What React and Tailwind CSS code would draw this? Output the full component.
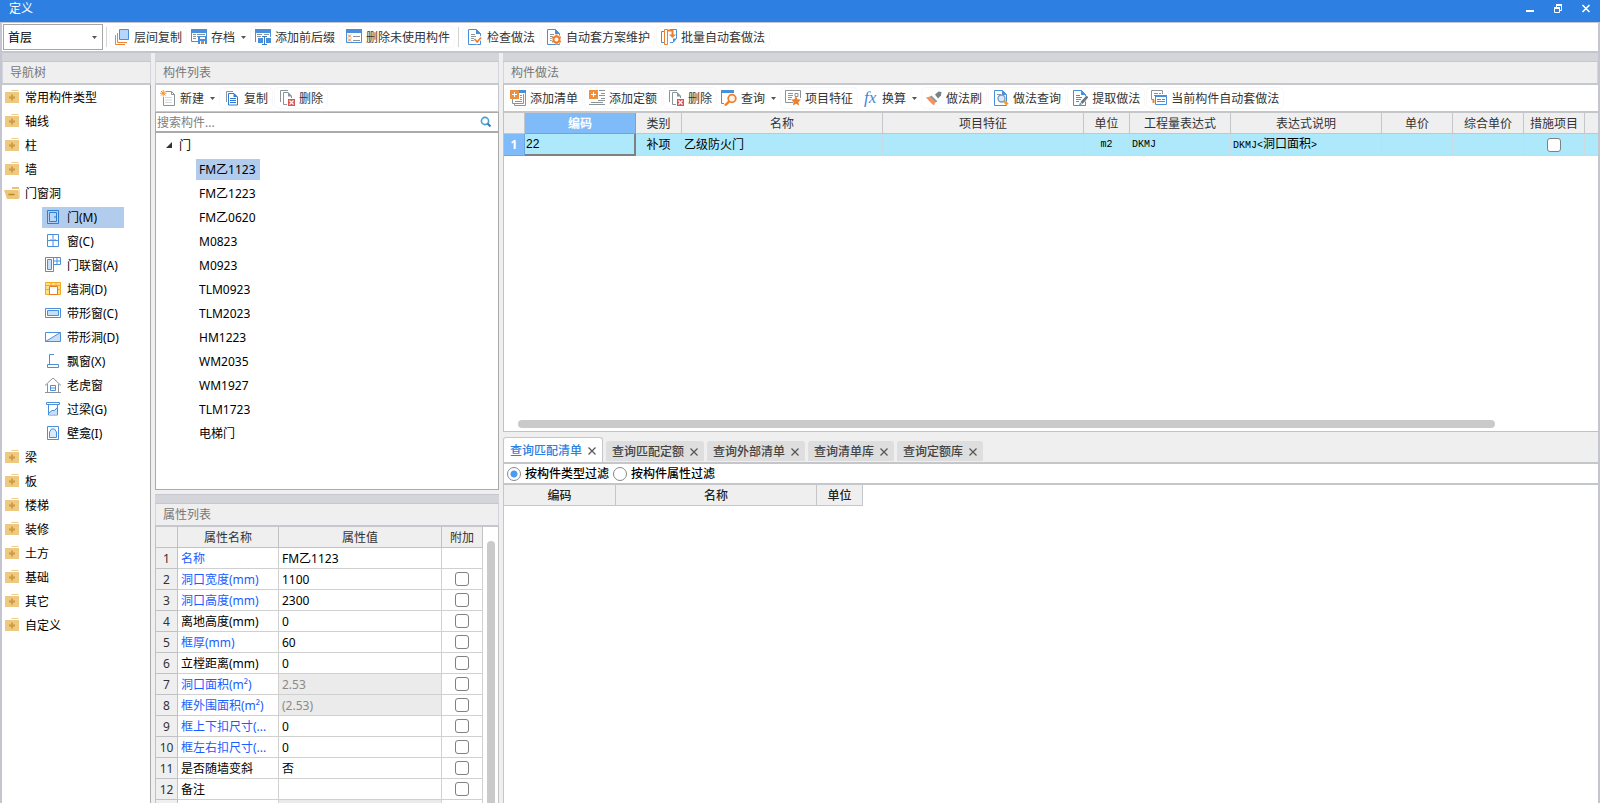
import { useState } from 'react';
import clsx from 'clsx';

const BLUE = '#4a8fdc';
const GRAY = '#8b9499';
const ORANGE = '#f07f2c';

function Svg({ children, size = 16 }) {
  return (
    <svg width={size} height={size} viewBox="0 0 16 16" fill="none" className="shrink-0" aria-hidden="true">
      {children}
    </svg>
  );
}

// page outline with a folded corner, shared by several document icons
function Page({ color = BLUE }) {
  return (
    <>
      <path d="M1.5 .5h8l4 4v11h-12z" fill="#fff" stroke={color} />
      <path d="M9 0v5h5z" fill={color} />
    </>
  );
}

function RedCross() {
  return (
    <>
      <path d="M9 9h7v7H9z" fill="#d85555" />
      <path d="M10.5 10.5l4 4m0-4l-4 4" stroke="#fff" strokeWidth="1.2" />
    </>
  );
}

const icons = {
  layers: (
    <>
      <path d="M1.5 6v9.5H11M3.5 4v9.5H13" stroke="#ee8338" />
      <path d="M5.5.5h9v10h-9z" fill="#b5d5fb" stroke={BLUE} />
    </>
  ),
  archive: (
    <>
      <path d="M.5 1v11.5H7M15.5 3v4" stroke={BLUE} />
      <path d="M0 0h16v4H0z" fill={BLUE} />
      <path d="M2 5.500h3M6 5.500h8M2 7.500h3M2 9.500h3M6 7.500h1" stroke={GRAY} />
      <path d="M7 7h9v8H7z" fill={BLUE} />
      <path d="M9 8h5v2H9zM9 12h5v3H9z" fill="#fff" />
      <path d="M10 12h3v3h-3z" fill={ORANGE} />
    </>
  ),
  affix: (
    <>
      <path d="M.5 2v11M15.5 2v6" stroke={BLUE} />
      <path d="M0 0h16v4H0z" fill={BLUE} />
      <path d="M2 5.500h5M9 5.500h5M2 7.500h4" stroke={GRAY} />
      <path d="M3 9h5v5H3zM11 9h5v5h-5z" fill={BLUE} />
      <path d="M7 7.500h5M9.500 7v8M7 15.500h5" stroke="#3c7cc4" />
    </>
  ),
  unused: (
    <>
      <path d="M.5.5h15v13H.5z" fill="#fff" stroke={BLUE} />
      <path d="M0 0h16v4H0z" fill={BLUE} />
      <path d="M2 5.5l3 3m0-3l-3 3m0 1l3 3m0-3l-3 3" stroke={ORANGE} />
      <path d="M7 7.5h7M7 11.5h7" stroke={GRAY} />
    </>
  ),
  check: (
    <>
      <Page />
      <path d="M4 5.500h4M4 7.500h5M4 9.500h3M4 11.500h3" stroke={GRAY} />
      <path d="M7.500 9.500l2.500 3.500L14.500 8" stroke="#fff" strokeWidth="3.500" />
      <path d="M7.500 10l2.700 3L14 8.500" stroke={ORANGE} strokeWidth="1.800" />
    </>
  ),
  plan: (
    <>
      <Page />
      <path d="M4 5.500h4M4 7.500h4M4 9.500h2M4 11.500h2" stroke={GRAY} />
      <circle cx="10.500" cy="10.500" r="5" fill="#fff" />
      <circle cx="10.500" cy="10.500" r="3" stroke={ORANGE} strokeWidth="2" />
      <path
        d="M10.500 5.500v2M10.500 13.500v2M6.200 8l1.700 1M13.100 12l1.700 1M6.200 13l1.700-1M13.100 9l1.700-1"
        stroke={ORANGE}
        strokeWidth="2"
      />
    </>
  ),
  batch: (
    <>
      <path d="M9 .5h6.500v9L12 13.500H9" stroke={BLUE} />
      <path d="M12 13.500v-4h3.500z" fill={BLUE} />
      <path d="M3 2.500H.5v11H3" stroke={BLUE} />
      <path d="M3.500.5h3v15h-3z" fill="#fff" stroke={ORANGE} />
      <path d="M6.500 1.500h5V7" stroke={ORANGE} strokeWidth="2" />
      <path d="M8 5.500h7L11.500 9z" fill={ORANGE} />
    </>
  ),
  create: (
    <>
      <path d="M6 1.500h5.500l3 3v11h-11V7" stroke={GRAY} />
      <path d="M11.500 1.500v3h3" stroke={GRAY} />
      <path d="M5 7.500h7M5 10h7M5 12.500h7" stroke="#d5d9dc" />
      <path d="M1 1l4.500 4.500M5.500 1L1 5.500M3.200 0v6.500M0 3.200h6.500" stroke="#f2952f" />
    </>
  ),
  copy: (
    <>
      <path d="M2.500 12V1.500H9" stroke={GRAY} />
      <path d="M4.500 3.500h5.500l3.500 3.500v8h-9z" fill="#fff" stroke="#2f7ad0" />
      <path d="M9.500 3v4h4z" fill="#2f7ad0" />
      <path d="M6 8.500h6M6 10.500h6M6 12.500h6" stroke="#2f7ad0" />
    </>
  ),
  remove: (
    <>
      <path d="M1.500 12V.500H9" stroke={GRAY} />
      <path d="M8 14.500H4.500v-12H9l3.500 3.500v2" stroke={GRAY} />
      <path d="M9 2v4.500h4z" fill={GRAY} />
      <RedCross />
    </>
  ),
  addList: (
    <>
      <path d="M9 0h7v3H9z" fill={BLUE} />
      <path d="M15.500 3v12.500h-11V13" stroke={GRAY} />
      <path d="M13.500 4v9.500h-11V9" stroke={GRAY} />
      <path d="M10 5.500h2M10 7.500h2M10 9.500h2M5 11.500h7" stroke={GRAY} />
      <path d="M0 0h9v9H0z" fill="#ec8f3e" />
      <path d="M2 4.500h5M4.500 2v5" stroke="#fff" />
    </>
  ),
  addQuota: (
    <>
      <path d="M10 .5h6M12 3.500h4M10 5.500h6M12 8.500h4M9 10.500h7M2 12.500h12M0 14.500h16" stroke={GRAY} />
      <path d="M0 0h9v9H0z" fill="#ec8f3e" />
      <path d="M2 4.500h5M4.500 2v5" stroke="#fff" />
    </>
  ),
  query: (
    <>
      <path d="M.5 2v11.500H3" stroke={BLUE} />
      <path d="M0 0h13v3H0z" fill={BLUE} />
      <circle cx="11" cy="8.500" r="3.800" fill="#fff3e8" stroke={ORANGE} strokeWidth="1.800" />
      <path d="M8.200 11.300L4 15.500" stroke={ORANGE} strokeWidth="2.400" />
    </>
  ),
  feature: (
    <>
      <path d="M8 12.500H.5V.500h15V8" stroke={GRAY} />
      <path d="M3 3.500h5M3 5.500h5M3 7.500h4M3 9.500h3M10 3.500h3v3h-3z" stroke={GRAY} />
      <path
        d="M11 6l1.500 3.200 3.500.4-2.600 2.300.7 3.600-3.100-1.800-3.100 1.800.7-3.600L6 9.600l3.500-.4z"
        fill={ORANGE}
      />
    </>
  ),
  brush: (
    <>
      <path d="M9 4.500L12.500 1.500 15.500 2l-.5 3.500-3 3z" fill="#76838a" />
      <path d="M5.500 5.500l6 6-2 1-6-5.500z" fill="#8d979c" />
      <path d="M0 7.500l4-1 5.500 5.500-1.500 3.500L5 13z" fill="#f9905c" />
    </>
  ),
  search: (
    <>
      <Page />
      <path d="M4 4.500h4" stroke={GRAY} />
      <circle cx="8.500" cy="8.500" r="3.500" fill="#d9e8fa" stroke="#7a9cc6" strokeWidth="1.400" />
      <path d="M11 11l3.500 3.500" stroke="#f0a030" strokeWidth="3" />
    </>
  ),
  extract: (
    <>
      <Page />
      <path d="M4 5.500h4M4 7.500h6M4 9.500h5M4 11.500h3" stroke={BLUE} />
      <path d="M15 7l-6 6.500" stroke="#fff" strokeWidth="4" />
      <path d="M15.500 6.500l-6 6.500" stroke="#69757c" strokeWidth="2.600" />
      <path d="M8 12.500l2 1.800-3 1.200z" fill="#3d9fc4" />
    </>
  ),
  current: (
    <>
      <path d="M3 9.500H.5v-9h11V4" stroke={GRAY} />
      <path d="M3 3.500h4M8 3.500h2M3 5.500h1" stroke={GRAY} />
      <path d="M2.500 10v3" stroke={ORANGE} strokeWidth="2" />
      <path d="M4.500 5.500h11v9h-11z" fill="#fff" stroke={BLUE} />
      <path d="M4 5h12v2H4z" fill={BLUE} />
      <path d="M6 9.500h4M6 11.500h8M11 9.500h3" stroke={BLUE} />
    </>
  ),
  // navigation tree
  door: (
    <>
      <path d="M2.500 1.500h11v13h-11z" fill="#b5d2f5" stroke="#2f7ed2" />
      <path d="M4.500 3.500h7v9h-7z" fill="#b9d6f7" stroke="#2f7ed2" />
      <path d="M9 8h2" stroke="#2f7ed2" />
    </>
  ),
  window: (
    <>
      <path d="M2.500 1.500h11v12h-11zM8 1v13M2 7.500h12" stroke={BLUE} />
      <path d="M5.500 6.500h1M9.500 6.500h1" stroke={BLUE} />
    </>
  ),
  doorWindow: (
    <>
      <path d="M.5.500h8v14h-8z" fill="#fff" stroke={BLUE} />
      <path d="M2.500 2.500h4v10h-4z" fill="#c9def7" stroke={BLUE} />
      <path d="M8.500.500h7v7h-7zM12 0v8M8 4h8" stroke={BLUE} />
    </>
  ),
  wallHole: (
    <>
      <path d="M.5 1.500h15v12H.5z" fill="#ffe08a" stroke="#f5a91c" />
      <path d="M0 4.500h16M0 8.500h4M12 8.500h4M6 1v3.500M11 1v3.500" stroke="#f5a91c" />
      <path d="M4.500 5.500h8v8h-8z" fill="#fff" stroke="#e8792a" />
    </>
  ),
  stripWindow: (
    <>
      <path d="M.5 3.500h15v9H.5z" fill="#fff" stroke={BLUE} />
      <path d="M2.500 5.500h11v5h-11z" fill="#c9def7" stroke={BLUE} />
    </>
  ),
  stripHole: (
    <>
      <path d="M.5 3.500h15v9H.5z" fill="#fff" />
      <path d="M15.500 3.500v9H.5z" fill="#c9def7" />
      <path d="M.5 3.500h15v9H.5zM.5 12.500l15-9" stroke={BLUE} />
    </>
  ),
  bay: <path d="M9 1.500H4.500v9.500M2.500 11.500h11v3h-11z" stroke={BLUE} />,
  dormer: (
    <>
      <path d="M0 8.500l8-7.500 8 7.500M2.500 7v8.500M13.500 7v8.500M0 15.500h16" stroke={GRAY} />
      <path d="M5.500 8.500h5v5h-5zM5 11h6" stroke={BLUE} />
    </>
  ),
  lintel: (
    <>
      <path d="M1.500 1.500h13v2h-13z" stroke={BLUE} />
      <path d="M3.500 3.500v10.500h9V3.500" stroke={BLUE} />
      <path d="M4 12l3-3h2l3-3v7.500H4z" fill="#c9def7" />
      <path d="M4 12l3-2.500h2.500L12 7" stroke={BLUE} />
    </>
  ),
  niche: (
    <>
      <path d="M2.500 1.500h11v13h-11z" fill="#fff" stroke={BLUE} />
      <path d="M4.500 12.500V7L6.500 4h3l2 3v5.500z" fill="#dce9fa" stroke={BLUE} />
    </>
  ),
  folder: (
    <>
      <path d="M8 1h6l1 1H7z" fill="#e9cd92" />
      <path d="M1 3h14v11H1z" fill="#eec982" />
      <path d="M5 8.500h6M8 5.500v6" stroke="#cd9a3c" strokeWidth="1.800" />
    </>
  ),
  folderOpen: (
    <>
      <path d="M3 5h12l1-2v10H4z" fill="#f4dda8" />
      <path d="M8 2h7v2H8z" fill="#e8c27a" />
      <path d="M0 5h14l1 9H3z" fill="#edc57a" />
      <path d="M4.500 9.500h6" stroke="#b98522" strokeWidth="1.400" />
    </>
  ),
};

function Icon({ name }) {
  if (name === 'fx') {
    return (
      <span className="w-4 shrink-0 font-[Liberation_Serif,serif] text-[17px] leading-4 text-[#3f87d9] italic">
        fx
      </span>
    );
  }
  return <Svg>{icons[name]}</Svg>;
}

function Caret() {
  return (
    <svg width="5" height="3" viewBox="0 0 5 3" className="shrink-0" aria-hidden="true">
      <path d="M0 0h5L2.500 3z" fill="#555" />
    </svg>
  );
}

function ToolButton({ icon, label, menu }) {
  return (
    <button
      type="button"
      className={clsx(
        'flex h-5 items-center rounded-sm whitespace-nowrap text-[#333] hover:bg-[#e6f1fd]',
        menu ? 'px-[2px]' : 'px-1 outline outline-[#f8f8f8]'
      )}
    >
      <Icon name={icon} />
      <span className="mt-px ml-1">{label}</span>
      {menu && (
        <span className="ml-[6px]">
          <Caret />
        </span>
      )}
    </button>
  );
}

function ToolGroup({ items }) {
  return (
    <div className="flex items-center gap-[3px]">
      {items.map((item) => (
        <ToolButton key={item.label} {...item} />
      ))}
    </div>
  );
}

function PanelTitle({ children, topLine }) {
  return (
    <header className="shrink-0 border-b-2 border-[#c6c8cd]">
      <div className={clsx('box-content h-2 border-b border-[#c6c8cf] bg-[#d4d5db]', topLine && 'border-t')} />
      <h2 className="h-[21px] border-x border-[#d4d5db] bg-[#efefef] pl-[7px] leading-[22px] text-[#777]">{children}</h2>
    </header>
  );
}

const editTools = [
  { icon: 'layers', label: '层间复制' },
  { icon: 'archive', label: '存档', menu: true },
  { icon: 'affix', label: '添加前后缀' },
  { icon: 'unused', label: '删除未使用构件' },
];

const methodTools = [
  { icon: 'check', label: '检查做法' },
  { icon: 'plan', label: '自动套方案维护' },
  { icon: 'batch', label: '批量自动套做法' },
];

const listTools = [
  { icon: 'create', label: '新建', menu: true },
  { icon: 'copy', label: '复制' },
  { icon: 'remove', label: '删除' },
];

const workTools = [
  { icon: 'addList', label: '添加清单' },
  { icon: 'addQuota', label: '添加定额' },
  { icon: 'remove', label: '删除' },
  { icon: 'query', label: '查询', menu: true },
  { icon: 'feature', label: '项目特征' },
  { icon: 'fx', label: '换算', menu: true },
  { icon: 'brush', label: '做法刷' },
  { icon: 'search', label: '做法查询' },
  { icon: 'extract', label: '提取做法' },
  { icon: 'current', label: '当前构件自动套做法' },
];

const navItems = [
  { label: '常用构件类型' },
  { label: '轴线' },
  { label: '柱' },
  { label: '墙' },
  {
    label: '门窗洞',
    children: [
      { icon: 'door', label: '门(M)' },
      { icon: 'window', label: '窗(C)' },
      { icon: 'doorWindow', label: '门联窗(A)' },
      { icon: 'wallHole', label: '墙洞(D)' },
      { icon: 'stripWindow', label: '带形窗(C)' },
      { icon: 'stripHole', label: '带形洞(D)' },
      { icon: 'bay', label: '飘窗(X)' },
      { icon: 'dormer', label: '老虎窗' },
      { icon: 'lintel', label: '过梁(G)' },
      { icon: 'niche', label: '壁龛(I)' },
    ],
  },
  { label: '梁' },
  { label: '板' },
  { label: '楼梯' },
  { label: '装修' },
  { label: '土方' },
  { label: '基础' },
  { label: '其它' },
  { label: '自定义' },
];

const components = [
  'FM乙1123',
  'FM乙1223',
  'FM乙0620',
  'M0823',
  'M0923',
  'TLM0923',
  'TLM2023',
  'HM1223',
  'WM2035',
  'WM1927',
  'TLM1723',
  '电梯门',
];

const properties = [
  { name: '名称', value: 'FM乙1123', blue: true, noExtra: true },
  { name: '洞口宽度(mm)', value: '1100', blue: true },
  { name: '洞口高度(mm)', value: '2300', blue: true },
  { name: '离地高度(mm)', value: '0' },
  { name: '框厚(mm)', value: '60', blue: true },
  { name: '立樘距离(mm)', value: '0' },
  { name: '洞口面积(m²)', value: '2.53', blue: true, readOnly: true },
  { name: '框外围面积(m²)', value: '(2.53)', blue: true, readOnly: true },
  { name: '框上下扣尺寸(...', value: '0', blue: true },
  { name: '框左右扣尺寸(...', value: '0', blue: true },
  { name: '是否随墙变斜', value: '否' },
  { name: '备注', value: '' },
];

const tabs = ['查询匹配清单', '查询匹配定额', '查询外部清单', '查询清单库', '查询定额库'];

function CheckBox({ label }) {
  return (
    <input
      type="checkbox"
      aria-label={label}
      className="mx-auto block size-[14px] appearance-none rounded-[3px] border border-[#808080] bg-white checked:bg-[#4a8fdc]"
    />
  );
}

function TitleBar() {
  return (
    <div className="flex h-[22px] shrink-0 items-center justify-between bg-[#2d7fe2] pr-2 pl-[9px] text-white">
      <h1 className="self-start pt-px leading-4">定义</h1>
      <div className="flex items-center gap-4">
        <button type="button" aria-label="最小化">
          <svg width="12" height="16" viewBox="0 0 12 16" className="block" aria-hidden="true">
            <path d="M2 7h8v2H2z" fill="#fff" />
          </svg>
        </button>
        <button type="button" aria-label="还原">
          <svg width="12" height="16" viewBox="0 0 12 16" fill="none" className="block" aria-hidden="true">
            <path d="M4 1h6v2H4zM2 4h6v2H2z" fill="#fff" />
            <path d="M4.500 2v2M9.500 2v5.500H8M2.500 5v4.500h5V5" stroke="#fff" />
          </svg>
        </button>
        <button type="button" aria-label="关闭">
          <svg width="12" height="16" viewBox="0 0 12 16" fill="none" className="block" aria-hidden="true">
            <path d="M2.500 2l7 7m0-7l-7 7" stroke="#fff" strokeWidth="1.600" />
          </svg>
        </button>
      </div>
    </div>
  );
}

function MainToolbar() {
  return (
    <div className="flex h-[31px] shrink-0 items-center border-t border-b-2 border-[#c3c6ce] bg-white pl-px">
      <div className="relative">
        <select
          aria-label="楼层"
          className="block h-[26px] w-[100px] appearance-none border border-[#a6a6a6] bg-white pt-px pl-1 text-black"
        >
          <option>首层</option>
        </select>
        <span className="pointer-events-none absolute top-3 right-[6px]">
          <Caret />
        </span>
      </div>
      <span className="mx-[3px] h-5 w-px bg-[#d4d4d4]" />
      <ToolGroup items={editTools} />
      <span className="mx-1 h-5 w-px bg-[#d4d4d4]" />
      <ToolGroup items={methodTools} />
    </div>
  );
}

function NavTree({ selected, onSelect }) {
  return (
    <section className="flex min-h-0 flex-col bg-white">
      <PanelTitle>导航树</PanelTitle>
      <ul className="min-h-0 flex-1 overflow-hidden border-r border-[#aaa]">
        {navItems.map((item) => (
          <li key={item.label}>
            <button type="button" className="flex h-6 items-center pl-[2px]">
              <Icon name={item.children ? 'folderOpen' : 'folder'} />
              <span className="mt-px ml-[5px]">{item.label}</span>
            </button>
            {item.children && (
              <ul className="pl-10">
                {item.children.map((child) => (
                  <li key={child.label} className="flex h-6 items-center">
                    <button
                      type="button"
                      onClick={() => onSelect(child.label)}
                      className={clsx(
                        'flex h-[21px] w-[82px] items-center pl-[3px]',
                        selected === child.label && 'bg-[#b2ccee]'
                      )}
                    >
                      <Icon name={child.icon} />
                      <span className="mt-px ml-[6px]">{child.label}</span>
                    </button>
                  </li>
                ))}
              </ul>
            )}
          </li>
        ))}
      </ul>
    </section>
  );
}

function ComponentList({ selected, onSelect }) {
  return (
    <section className="flex min-h-0 flex-col">
      <PanelTitle>构件列表</PanelTitle>
      <div className="flex h-[27px] shrink-0 items-center border-x border-b border-[#c4c6c9] bg-white pl-[2px]">
        <ToolGroup items={listTools} />
      </div>
      <div className="flex h-[21px] shrink-0 items-center border border-b-2 border-[#aaa] bg-white pr-[6px]">
        <input
          type="text"
          aria-label="搜索构件"
          placeholder="搜索构件..."
          className="h-full min-w-0 flex-1 pl-px placeholder:text-[#808080] focus:outline-none"
        />
        <svg width="12" height="12" viewBox="0 0 12 12" fill="none" aria-hidden="true">
          <circle cx="5" cy="5" r="3.600" stroke="#4a9fd0" strokeWidth="1.600" />
          <path d="M7.500 7.500l3 3" stroke="#2d7fb8" strokeWidth="2" />
        </svg>
      </div>
      <div className="min-h-0 flex-1 overflow-hidden border border-t-0 border-[#aaa] bg-white">
        <div className="flex h-6 items-center pl-[10px]">
          <svg width="6" height="6" viewBox="0 0 6 6" aria-hidden="true">
            <path d="M6 0v6H0z" fill="#333" />
          </svg>
          <span className="mt-px ml-[7px]">门</span>
        </div>
        <ul className="pl-10">
          {components.map((name) => (
            <li key={name} className="flex h-6 items-center">
              <button
                type="button"
                onClick={() => onSelect(name)}
                className={clsx('h-[21px] pr-1 pl-[3px] leading-[21px]', selected === name && 'bg-[#b2ccee]')}
              >
                {name}
              </button>
            </li>
          ))}
        </ul>
      </div>
    </section>
  );
}

function PropertyList() {
  const cell = 'h-[21px] overflow-hidden border-r border-b border-[#d0d0d0] p-0 whitespace-nowrap';
  const head = 'h-[21px] border-r border-b border-[#c0c2c5] bg-[#efefef] p-0 pt-px font-normal text-[#333]';

  return (
    <section className="flex min-h-0 flex-col overflow-hidden">
      <PanelTitle topLine>属性列表</PanelTitle>
      <div className="flex min-h-0 flex-1 overflow-hidden border-x border-[#c0c2c5] bg-white">
        <table className="w-[327px] shrink-0 table-fixed border-separate border-spacing-0 self-start">
          <colgroup>
            <col className="w-[22px]" />
            <col className="w-[101px]" />
            <col className="w-[163px]" />
            <col className="w-[41px]" />
          </colgroup>
          <thead>
            <tr>
              <th className={head} />
              <th className={head}>属性名称</th>
              <th className={head}>属性值</th>
              <th className={head}>附加</th>
            </tr>
          </thead>
          <tbody>
            {properties.map((prop, i) => (
              <tr key={prop.name}>
                <th className={head}>{i + 1}</th>
                <td className={clsx(cell, 'pt-px pl-[3px]', prop.blue && 'text-[#1a5cff]')}>{prop.name}</td>
                <td className={clsx(cell, 'pt-px pl-[3px]', prop.readOnly && 'bg-[#ebebeb] text-[#8a8a8a]')}>
                  {prop.value}
                </td>
                <td className={cell}>{!prop.noExtra && <CheckBox label={prop.name} />}</td>
              </tr>
            ))}
            <tr>
              <th className={head} />
              <td className={cell} />
              <td className={clsx(cell, 'bg-[#ebebeb]')} />
              <td className={cell} />
            </tr>
          </tbody>
        </table>
        <div className="mt-[14px] ml-1 w-2 rounded-t-full bg-[#cacaca]" />
      </div>
    </section>
  );
}

function WorkPanel() {
  const head = 'h-[21px] border-r border-b border-[#c4c6c9] bg-[#efefef] p-0 pt-px font-normal text-[#333]';
  const cell = 'h-[22px] border-r border-b border-[#c9dbe2] bg-[#ade8fb] p-0 whitespace-nowrap';
  const columns = ['类别', '名称', '项目特征', '单位', '工程量表达式', '表达式说明', '单价', '综合单价', '措施项目'];

  return (
    <section className="flex min-h-0 flex-col">
      <PanelTitle>构件做法</PanelTitle>
      <div className="flex min-h-0 flex-1 flex-col overflow-hidden border-b border-l border-[#c0c2c5] bg-white">
        <div className="flex h-7 shrink-0 items-center border-b-2 border-[#c4c6c9] pl-[2px]">
          <ToolGroup items={workTools} />
        </div>
        <table className="w-full table-fixed border-separate border-spacing-0">
          <colgroup>
            <col className="w-[21px]" />
            <col className="w-[111px]" />
            <col className="w-[46px]" />
            <col className="w-[201px]" />
            <col className="w-[201px]" />
            <col className="w-[46px]" />
            <col className="w-[101px]" />
            <col className="w-[151px]" />
            <col className="w-[71px]" />
            <col className="w-[71px]" />
            <col className="w-[61px]" />
            <col />
          </colgroup>
          <thead>
            <tr>
              <th className={head} />
              <th className="h-[21px] border-r border-b border-[#69a5e8] bg-[#80bbf9] p-0 pt-px font-bold text-white">
                编码
              </th>
              {columns.map((name) => (
                <th key={name} className={head}>
                  {name}
                </th>
              ))}
              <th className="border-b border-[#c4c6c9] bg-[#efefef] p-0" />
            </tr>
          </thead>
          <tbody>
            <tr>
              <th className="h-[22px] border-r border-b border-[#69a5e8] bg-[#80bbf9] p-0 font-bold text-white">1</th>
              <td className="h-[22px] border-r-2 border-b-2 border-[#808080] bg-[#ade8fb] p-0 pl-px font-[Liberation_Sans,sans-serif]">
                22
              </td>
              <td className={clsx(cell, 'text-center')}>补项</td>
              <td className={clsx(cell, 'pl-[2px]')}>乙级防火门</td>
              <td className={cell} />
              <td className={clsx(cell, 'text-center font-[Liberation_Mono,monospace] text-[10px]')}>m2</td>
              <td className={clsx(cell, 'pl-[2px] font-[Liberation_Mono,monospace] text-[10px]')}>DKMJ</td>
              <td className={clsx(cell, 'pl-[2px]')}>
                <span className="font-[Liberation_Mono,monospace] text-[10px]">DKMJ&lt;</span>洞口面积
                <span className="font-[Liberation_Mono,monospace] text-[10px]">&gt;</span>
              </td>
              <td className={cell} />
              <td className={cell} />
              <td className={cell}>
                <CheckBox label="措施项目" />
              </td>
              <td className="border-b border-[#c9dbe2] bg-[#ade8fb] p-0" />
            </tr>
          </tbody>
        </table>
        <div className="mt-auto mr-[103px] mb-[3px] ml-[14px] h-2 shrink-0 rounded-full bg-[#cacaca]" />
      </div>
    </section>
  );
}

function QueryPanel() {
  const [tab, setTab] = useState(tabs[0]);
  const [filter, setFilter] = useState('type');
  const head = 'h-[21px] border-r border-b border-[#c4c6c9] bg-[#efefef] p-0 pt-px font-medium text-[#222]';
  const radio =
    'size-[14px] appearance-none rounded-full border border-[#888] bg-white checked:bg-[radial-gradient(circle,#4a9bf5_3px,#fff_4px)]';

  return (
    <section className="flex min-h-0 flex-col">
      <div role="tablist" className="flex h-[25px] shrink-0 items-end gap-[3px]">
        {tabs.map((name) => (
          <button
            key={name}
            type="button"
            role="tab"
            aria-selected={tab === name}
            onClick={() => setTab(name)}
            className={clsx(
              'flex items-center gap-[6px] rounded-t-[3px] px-[6px] pt-px font-medium whitespace-nowrap',
              tab === name
                ? 'h-[25px] border border-b-0 border-[#c4c6c9] bg-white text-[#2d7fe2]'
                : 'mb-px h-5 bg-[#dedede] text-[#444]'
            )}
          >
            {name}
            <svg width="8" height="8" viewBox="0 0 8 8" fill="none" aria-hidden="true">
              <path d="M.5.500l7 7m0-7l-7 7" stroke="#555" strokeWidth="1.200" />
            </svg>
          </button>
        ))}
      </div>
      <div className="min-h-0 flex-1 border-t-2 border-l border-[#c4c6c9] bg-white">
        <div className="flex h-[21px] items-center gap-1 border-b-2 border-[#c4c6c9] pl-[3px] font-medium">
          <label className="flex items-center gap-1">
            <input
              type="radio"
              name="filter"
              checked={filter === 'type'}
              onChange={() => setFilter('type')}
              className={radio}
            />
            按构件类型过滤
          </label>
          <label className="flex items-center gap-1">
            <input
              type="radio"
              name="filter"
              checked={filter === 'property'}
              onChange={() => setFilter('property')}
              className={radio}
            />
            按构件属性过滤
          </label>
        </div>
        <table className="w-[359px] table-fixed border-separate border-spacing-0">
          <colgroup>
            <col className="w-[112px]" />
            <col className="w-[201px]" />
            <col className="w-[46px]" />
          </colgroup>
          <thead>
            <tr>
              <th className={head}>编码</th>
              <th className={head}>名称</th>
              <th className={head}>单位</th>
            </tr>
          </thead>
        </table>
      </div>
    </section>
  );
}

export default function App() {
  const [type, setType] = useState('门(M)');
  const [component, setComponent] = useState('FM乙1123');

  return (
    <div className="flex h-screen min-w-[1280px] flex-col overflow-hidden bg-[#efefef] font-['Noto_Sans','Noto_Sans_CJK_SC',sans-serif] text-[12px] leading-4 text-black">
      <TitleBar />
      <div className="flex min-h-0 flex-1 flex-col border-x-2 border-[#c3c6d0]">
        <MainToolbar />
        <main className="grid min-h-0 flex-1 grid-cols-[149px_344px_minmax(0,1fr)] gap-1">
          <NavTree selected={type} onSelect={setType} />
          <div className="grid min-h-0 grid-rows-[437fr_309fr] gap-1">
            <ComponentList selected={component} onSelect={setComponent} />
            <PropertyList />
          </div>
          <div className="grid min-h-0 grid-rows-[379fr_366fr] gap-[5px]">
            <WorkPanel />
            <QueryPanel />
          </div>
        </main>
      </div>
    </div>
  );
}
